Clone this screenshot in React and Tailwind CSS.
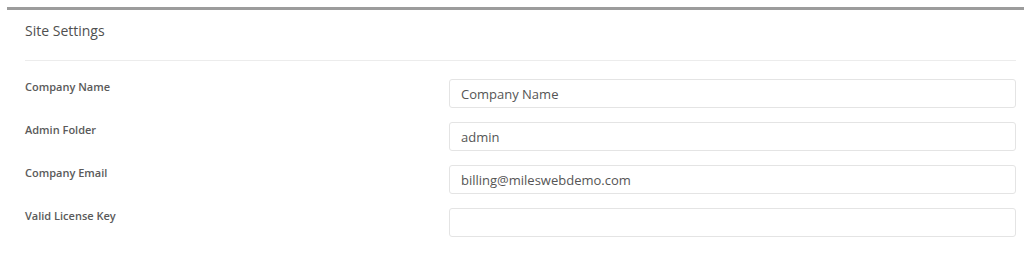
const fields = [
  { label: "Company Name", value: "Company Name" },
  { label: "Admin Folder", value: "admin" },
  { label: "Company Email", value: "billing@mileswebdemo.com" },
  { label: "Valid License Key", value: "" },
];

export default function App() {
  return (
    <div className="min-h-[275px] bg-white pt-[7px] pl-[7px] font-['Open_Sans',sans-serif] text-[#555]">
      <div className="border-t-[3px] border-[#9c9c9c] bg-white pl-[18px] pr-[8px]">
        {/* Header */}
        <div className="border-b border-[#ececec] pt-[11px] pb-[19px]">
          <h2 className="text-[14px] leading-5 font-medium text-[#4f4f4f]">Site Settings</h2>
        </div>

        {/* Form rows */}
        <div className="pt-[18px]">
          {fields.map((f) => (
            <div key={f.label} className="mb-[14px] flex items-start">
              <label className="w-[424px] shrink-0 text-[11px] leading-4 font-semibold text-[#5a5a5a]">
                {f.label}
              </label>
              <input
                type="text"
                defaultValue={f.value}
                className="h-[29px] flex-1 rounded-[3px] border border-[#e4e4e4] bg-white px-[11px] text-[13px] text-[#555] outline-none"
              />
            </div>
          ))}
        </div>
      </div>
    </div>
  );
}
